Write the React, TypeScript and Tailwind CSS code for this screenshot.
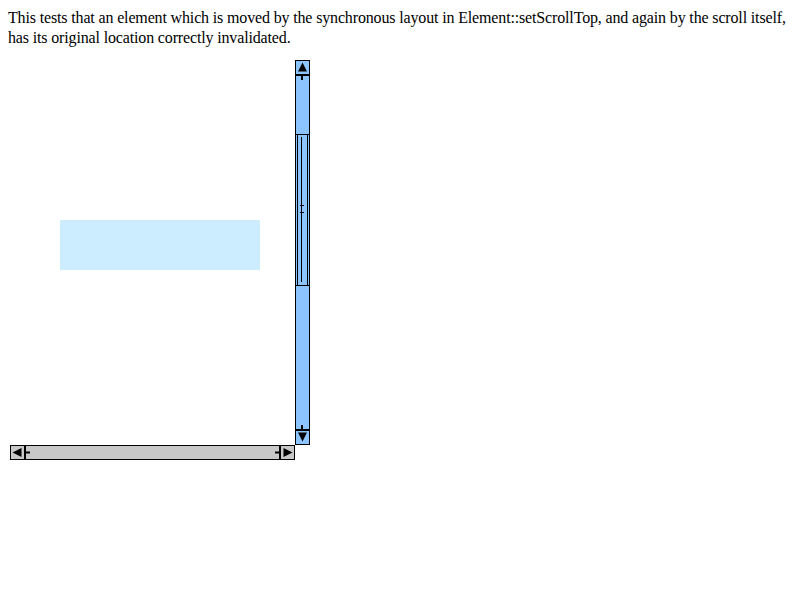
import React from "react";

export default function App() {
  return (
    <div className="min-h-[600px] bg-white p-[8px] text-black font-['Liberation_Serif',serif] text-[16px] leading-[20px]">
      <div className="tracking-[-0.15px]">
        This tests that an element which is moved by the synchronous layout in Element::setScrollTop, and again by the scroll itself, has its original location correctly invalidated.
      </div>
      <div className="mt-[12px] ml-[2px] flex h-[400px] w-[300px] flex-col">
        <div className="flex h-[385px]">
          <div className="flex-1 pl-[50px] pt-[160px]">
            <div className="h-[50px] w-[200px] bg-[#ccecff]" />
          </div>
          <div className="flex w-[15px] flex-col border border-black bg-[#8cc4ff]">
            <svg width="13" height="19" viewBox="0 0 13 19" className="block shrink-0">
              <polygon points="2,10.5 6.5,1.5 11,10.5" fill="black" />
              <rect x="0" y="13" width="13" height="2" fill="black" />
              <rect x="5" y="15" width="2" height="4" fill="black" />
            </svg>
            <svg width="13" height="152" viewBox="0 0 13 152" className="mt-[54px] block shrink-0">
              <rect x="0" y="0" width="13" height="1" fill="black" />
              <rect x="0" y="151" width="13" height="1" fill="black" />
              <rect x="1" y="0" width="1" height="152" fill="black" />
              <rect x="11" y="0" width="1" height="152" fill="black" />
              <rect x="5" y="3" width="1" height="145" fill="black" />
              <rect x="4" y="71" width="4" height="1" fill="black" />
              <rect x="4" y="78" width="4" height="1" fill="black" />
            </svg>
            <div className="flex-1" />
            <svg width="13" height="19" viewBox="0 0 13 19" className="block shrink-0">
              <rect x="5" y="0" width="2" height="4" fill="black" />
              <rect x="0" y="4" width="13" height="2" fill="black" />
              <polygon points="2,7.5 11,7.5 6.5,16.5" fill="black" />
            </svg>
          </div>
        </div>
        <div className="flex h-[15px]">
          <div className="flex w-[285px] items-center justify-between border border-black bg-[#c8c8c8]">
            <svg width="19" height="13" viewBox="0 0 19 13" className="block shrink-0">
              <polygon points="1.5,6.5 10.5,2 10.5,11" fill="black" />
              <rect x="13" y="0" width="2" height="13" fill="black" />
              <rect x="15" y="5.5" width="4" height="2" fill="black" />
            </svg>
            <svg width="19" height="13" viewBox="0 0 19 13" className="block shrink-0">
              <rect x="0" y="5.5" width="4" height="2" fill="black" />
              <rect x="4" y="0" width="2" height="13" fill="black" />
              <polygon points="17.5,6.5 8.5,2 8.5,11" fill="black" />
            </svg>
          </div>
          <div className="w-[15px] bg-white" />
        </div>
      </div>
    </div>
  );
}
